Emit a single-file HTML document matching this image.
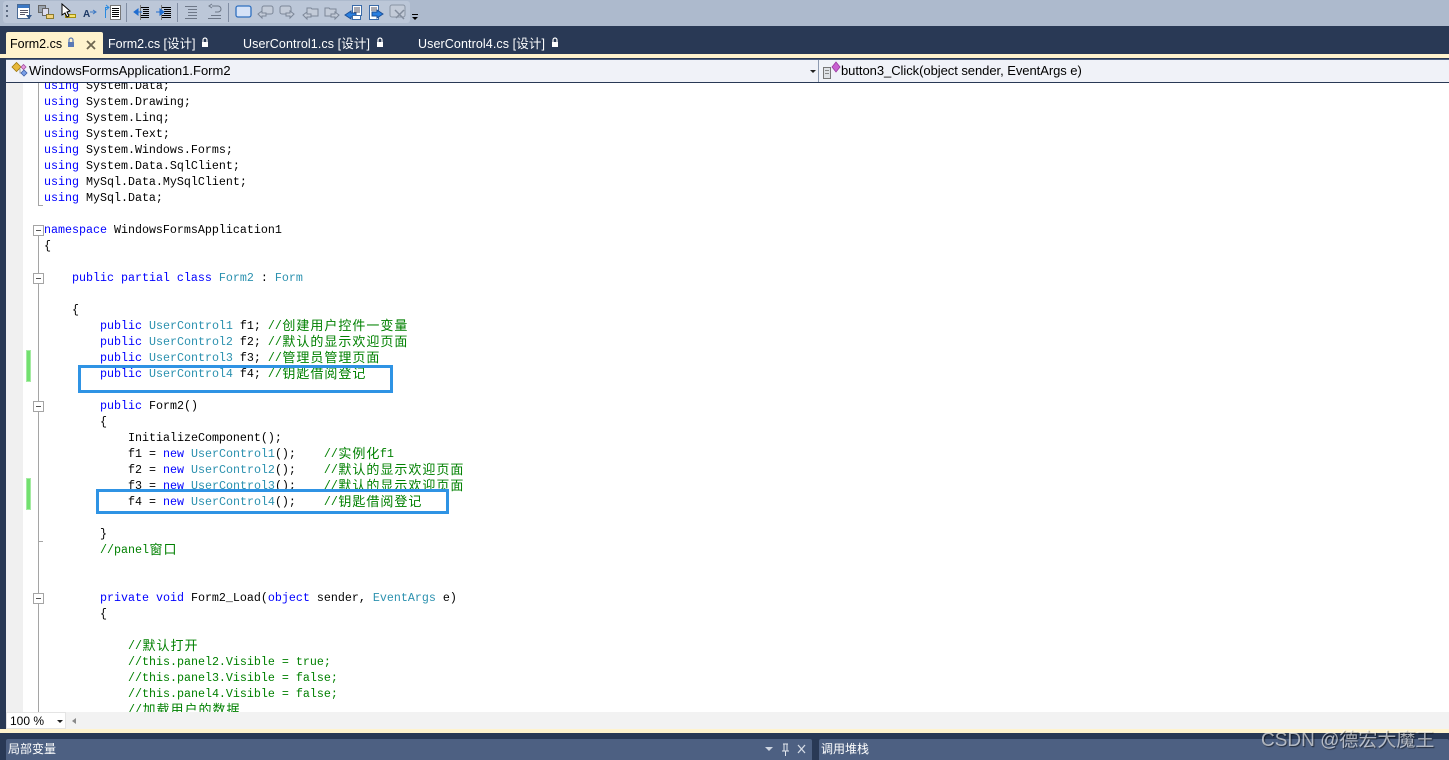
<!DOCTYPE html>
<html lang="zh"><head><meta charset="utf-8"><title>Form2.cs</title>
<style>
html,body{margin:0;padding:0;width:1449px;height:760px;overflow:hidden;background:#293955}
body{position:relative;font-family:"Liberation Sans","Noto Sans CJK SC",sans-serif}
.a{position:absolute}
#tb{left:0;top:0;width:1449px;height:26px;background:#adbacd}
#tbi{left:3px;top:1px;width:407px;height:22px;background:#bcc7d8;border-radius:3px}
.tab{position:absolute;top:36px;height:16px;line-height:16px;font-size:12.5px;color:#fff;white-space:pre}
#code{left:23px;top:83px;width:1426px;height:629px;background:#fff;overflow:hidden}
.l{position:absolute;height:16px;line-height:16px;white-space:pre;font-family:"Liberation Mono",monospace;font-size:11.67px;color:#000}
.k{color:#0000ff}.t{color:#2b91af}.c{color:#008000}
.z{font-family:"Noto Sans CJK SC",sans-serif;font-size:13px;display:inline-block;width:14px;text-align:center;line-height:16px;vertical-align:top;position:relative;top:-1px}
.m{position:absolute;width:9px;height:9px;border:1px solid #a5a5a5;background:#fff;left:33px}
.m:after{content:"";position:absolute;left:2px;top:4px;width:5px;height:1px;background:#555}
.g{position:absolute;left:26px;width:5px;background:#72e06f;border:0;box-shadow:inset 0 0 0 1px #a5eba3}
.box{position:absolute;border:3px solid #2f93e4;box-sizing:border-box}
.cr path,.cr rect{shape-rendering:crispEdges}
</style></head>
<body>
<div class="a" id="tb"></div><div class="a" id="tbi"></div>
<svg class="a" style="left:0;top:0" width="430" height="26" viewBox="0 0 430 26">
<g fill="#5c6a80"><rect x="6" y="5" width="2" height="2"/><rect x="6" y="10" width="2" height="2"/><rect x="6" y="15" width="2" height="2"/></g>
<g class="cr">
<rect x="17.500" y="4.500" width="12" height="14" fill="#fff" stroke="#4a6a94"/><rect x="18" y="5" width="11" height="3" fill="#3b78c4"/><path d="M20 10.500h8M20 12.500h8M20 14.500h5" stroke="#556" fill="none"/>
<rect x="38.500" y="5.500" width="7" height="7" fill="#99a2ad" stroke="#666"/><rect x="42.500" y="8.500" width="6" height="7" fill="#dde" stroke="#666"/><rect x="46.500" y="14.500" width="7" height="4" fill="#f2d27a" stroke="#8a7a30"/>
<rect x="65.500" y="14.500" width="10" height="3" fill="#f5e26e" stroke="#a38f10"/>
<path d="M105.500 18V7.500h3" stroke="#2a8ae0" fill="none"/><rect x="110.500" y="5.500" width="10" height="14" fill="#fff" stroke="#777"/><path d="M112 8.500h7M112 10.500h7M112 12.500h7M112 14.500h7M112 16.500h7" stroke="#000" fill="none"/>
<rect x="126" y="3" width="1" height="19" fill="#808da3"/>
<path d="M140 7.500h9M143 9.500h6M143 11.500h6M143 13.500h6M140 15.500h9M140 17.500h9" stroke="#000" fill="none"/><path d="M140.500 5v15" stroke="#777"/>
<path d="M161 7.500h10M164 9.500h7M164 11.500h7M164 13.500h7M161 15.500h10M161 17.500h10" stroke="#000" fill="none"/><path d="M161.500 5v15" stroke="#777"/>
<rect x="177" y="3" width="1" height="19" fill="#808da3"/>
<path d="M185 6.500h12M188 9.500h9M188 12.500h9M188 15.500h9M185 18.500h12" stroke="#6e7888" fill="none"/>
<path d="M208 18.500h13M211 15.500h10" stroke="#6e7888" fill="none"/>
<rect x="228" y="3" width="1" height="19" fill="#808da3"/>
<path d="M412 14.500h6" stroke="#000" fill="none"/>
</g>
<path d="M62 4v11l3-2 2 4 2-1-2-4 3-1z" fill="#fff" stroke="#000"/>
<path d="M26 15l3 4 3-4z" fill="#35588a"/>
<text x="83" y="17" font-family="Liberation Sans" font-size="10" font-weight="bold" fill="#1d3a66">A</text><path d="M90 12h5M93 10l3 2-3 2" stroke="#3b78c4" fill="none"/>
<path d="M106 5l3 2.500-3 2.500" stroke="#2a8ae0" fill="none"/>
<path d="M142 12h-7M138 9l-4 3 4 3z" stroke="#1f6dd0" fill="#1f6dd0"/>
<path d="M156 12h7M160 9l4 3-4 3z" stroke="#1f6dd0" fill="#1f6dd0"/>
<path d="M212 6h6a3 3 0 0 1 0 6h-3M212 4l-3 2 3 2" stroke="#6e7888" fill="none"/>
<rect x="236" y="6" width="15" height="11" rx="2" fill="#d5e2f7" stroke="#2f6fbf" stroke-width="1.300"/>
<g fill="#c3cbd8" stroke="#7c8798"><rect x="262" y="6" width="11" height="8" rx="2"/><path d="M258 14l4-3v2h4v3h-4v2z"/><rect x="280" y="6" width="11" height="8" rx="2"/><path d="M294 14l-4-3v2h-4v3h4v2z"/><path d="M307 8h4l1 1h6v7h-11z"/><path d="M303 15l4-3v2h4v3h-4v2z"/><path d="M325 8h4l1 1h6v7h-11z"/><path d="M339 15l-4-3v2h-4v3h4v2z"/></g>
<rect x="352.500" y="5.500" width="9" height="10" fill="#fff" stroke="#3a6aa8"/><path d="M354 8h6M354 10h6M354 12h6" stroke="#556"/><path d="M345 15l6-4v2h5v4h-5v2z" fill="#2a7fe0" stroke="#1c4f96"/><rect x="352.500" y="15.500" width="8" height="4" fill="#fff" stroke="#3a6aa8"/>
<rect x="369.500" y="5.500" width="9" height="14" fill="#fff" stroke="#3a6aa8"/><path d="M371 8h6M371 10h6" stroke="#556"/><path d="M383 14l-6-4v2h-5v4h5v2z" fill="#2a7fe0" stroke="#1c4f96"/>
<rect x="390" y="5" width="15" height="12" rx="2" fill="#c3cbd8" stroke="#8a94a4"/><path d="M395 10l9 9M404 10l-8 8" stroke="#838d9d" stroke-width="1.500"/>
<path d="M412 17h6l-3 3z" fill="#000"/>
</svg>

<div class="a" style="left:6px;top:32px;width:97px;height:22px;background:#fff3cd;border-radius:2px 2px 0 0"></div>
<div class="tab" style="left:10px;color:#000">Form2.cs</div>
<svg class="a" style="left:0;top:30px" width="600" height="24" viewBox="0 0 600 24">
<g fill="none" stroke="#5a79b5" stroke-width="1.200"><path d="M69 12v-2a2 2 0 0 1 4 0v2"/></g><rect x="68" y="12" width="6" height="5" fill="#5a79b5"/>
<path d="M87 11l8 8M95 11l-8 8" stroke="#6e6650" stroke-width="1.800"/>
<g fill="none" stroke="#fff" stroke-width="1.200"><path d="M203 12v-2a2 2 0 0 1 4 0v2M378 12v-2a2 2 0 0 1 4 0v2M553 12v-2a2 2 0 0 1 4 0v2"/></g>
<g fill="#fff"><rect x="202" y="12" width="6" height="5"/><rect x="377" y="12" width="6" height="5"/><rect x="552" y="12" width="6" height="5"/></g>
</svg>
<div class="tab" style="left:108px">Form2.cs [设计]</div>
<div class="tab" style="left:243px;letter-spacing:.1px">UserControl1.cs [设计]</div>
<div class="tab" style="left:418px;letter-spacing:.1px">UserControl4.cs [设计]</div>

<div class="a" style="left:0;top:54px;width:1449px;height:4px;background:#fff3cd"></div>
<div class="a" style="left:6px;top:59px;width:1443px;height:22px;background:#f0f2f8;border-top:1px solid #4d6082;border-bottom:1px solid #4d6082"></div>
<div class="a" style="left:6px;top:58px;width:1443px;height:1px;background:#293955"></div>
<div class="a" style="left:6px;top:82px;width:1443px;height:1px;background:#293955"></div>
<div class="a" style="left:818px;top:60px;width:1px;height:22px;background:#8d9ab0"></div>
<svg class="a" style="left:10px;top:60px" width="20" height="20" viewBox="0 0 20 20"><path d="M2 7l4.500-4.500 4.500 4.500-4.500 4.500z" fill="#e8b93a" stroke="#a07a10" stroke-width=".8"/><path d="M11 7l2.500-2.500 2.500 2.500-2.500 2.500z" fill="#e79adf" stroke="#a050a0" stroke-width=".8"/><path d="M10 9v4h2" stroke="#888" fill="none" stroke-width=".8"/><path d="M11 13l3-3 3 3-3 3z" fill="#7aa0e8" stroke="#4060a8" stroke-width=".8"/></svg>
<div class="a" style="left:29px;top:62px;height:17px;line-height:17px;font-size:13px;color:#000;white-space:pre">WindowsFormsApplication1.Form2</div>
<svg class="a" style="left:810px;top:60px" width="32" height="22" viewBox="0 0 32 22"><path d="M0 10h6l-3 3z" fill="#222"/><rect x="13.500" y="7.500" width="7" height="11" fill="#dfe2e6" stroke="#777"/><path d="M15 10.500h4M15 13.500h4" stroke="#888"/><path d="M26 2l4 5-4 5-4-5z" fill="#c860d0" stroke="#9a3aa0" stroke-width=".8"/></svg>
<div class="a" style="left:841px;top:62px;height:17px;line-height:17px;font-size:13px;letter-spacing:-.05px;color:#000;white-space:pre">button3_Click(object sender, EventArgs e)</div>

<div class="a" style="left:0;top:58px;width:6px;height:681px;background:#293955"></div>
<div class="a" style="left:6px;top:83px;width:17px;height:629px;background:#f0f0f0"></div>
<div class="a" id="code"></div>
<div class="a" style="left:38px;top:83px;width:1px;height:123px;background:#a5a5a5"></div>
<div class="a" style="left:38px;top:205px;width:5px;height:1px;background:#a5a5a5"></div>
<div class="a" style="left:38px;top:235px;width:1px;height:477px;background:#a5a5a5"></div>
<div class="a" style="left:38px;top:541px;width:5px;height:1px;background:#a5a5a5"></div>
<div class="m" style="top:225px"></div><div class="m" style="top:273px"></div><div class="m" style="top:401px"></div><div class="m" style="top:593px"></div>
<div class="g" style="top:350px;height:32px"></div><div class="g" style="top:478px;height:32px"></div>

<div class="a" style="left:0;top:83px;width:1449px;height:629px;overflow:hidden">
<div style="position:absolute;left:0;top:-83px;width:1449px;height:712px">
<div class="l" style="left:44px;top:78px"><span class="k">using</span> System.Data;</div>
<div class="l" style="left:44px;top:94px"><span class="k">using</span> System.Drawing;</div>
<div class="l" style="left:44px;top:110px"><span class="k">using</span> System.Linq;</div>
<div class="l" style="left:44px;top:126px"><span class="k">using</span> System.Text;</div>
<div class="l" style="left:44px;top:142px"><span class="k">using</span> System.Windows.Forms;</div>
<div class="l" style="left:44px;top:158px"><span class="k">using</span> System.Data.SqlClient;</div>
<div class="l" style="left:44px;top:174px"><span class="k">using</span> MySql.Data.MySqlClient;</div>
<div class="l" style="left:44px;top:190px"><span class="k">using</span> MySql.Data;</div>
<div class="l" style="left:44px;top:222px"><span class="k">namespace</span> WindowsFormsApplication1</div>
<div class="l" style="left:44px;top:238px">{</div>
<div class="l" style="left:72px;top:270px"><span class="k">public partial class</span> <span class="t">Form2</span> : <span class="t">Form</span></div>
<div class="l" style="left:72px;top:302px">{</div>
<div class="l" style="left:100px;top:318px"><span class="k">public</span> <span class="t">UserControl1</span> f1; <span class="c">//<span class="z">创</span><span class="z">建</span><span class="z">用</span><span class="z">户</span><span class="z">控</span><span class="z">件</span><span class="z">一</span><span class="z">变</span><span class="z">量</span></span></div>
<div class="l" style="left:100px;top:334px"><span class="k">public</span> <span class="t">UserControl2</span> f2; <span class="c">//<span class="z">默</span><span class="z">认</span><span class="z">的</span><span class="z">显</span><span class="z">示</span><span class="z">欢</span><span class="z">迎</span><span class="z">页</span><span class="z">面</span></span></div>
<div class="l" style="left:100px;top:350px"><span class="k">public</span> <span class="t">UserControl3</span> f3; <span class="c">//<span class="z">管</span><span class="z">理</span><span class="z">员</span><span class="z">管</span><span class="z">理</span><span class="z">页</span><span class="z">面</span></span></div>
<div class="l" style="left:100px;top:366px"><span class="k">public</span> <span class="t">UserControl4</span> f4; <span class="c">//<span class="z">钥</span><span class="z">匙</span><span class="z">借</span><span class="z">阅</span><span class="z">登</span><span class="z">记</span></span></div>
<div class="l" style="left:100px;top:398px"><span class="k">public</span> Form2()</div>
<div class="l" style="left:100px;top:414px">{</div>
<div class="l" style="left:128px;top:430px">InitializeComponent();</div>
<div class="l" style="left:128px;top:446px">f1 = <span class="k">new</span> <span class="t">UserControl1</span>();    <span class="c">//<span class="z">实</span><span class="z">例</span><span class="z">化</span>f1</span></div>
<div class="l" style="left:128px;top:462px">f2 = <span class="k">new</span> <span class="t">UserControl2</span>();    <span class="c">//<span class="z">默</span><span class="z">认</span><span class="z">的</span><span class="z">显</span><span class="z">示</span><span class="z">欢</span><span class="z">迎</span><span class="z">页</span><span class="z">面</span></span></div>
<div class="l" style="left:128px;top:478px">f3 = <span class="k">new</span> <span class="t">UserControl3</span>();    <span class="c">//<span class="z">默</span><span class="z">认</span><span class="z">的</span><span class="z">显</span><span class="z">示</span><span class="z">欢</span><span class="z">迎</span><span class="z">页</span><span class="z">面</span></span></div>
<div class="l" style="left:128px;top:494px">f4 = <span class="k">new</span> <span class="t">UserControl4</span>();    <span class="c">//<span class="z">钥</span><span class="z">匙</span><span class="z">借</span><span class="z">阅</span><span class="z">登</span><span class="z">记</span></span></div>
<div class="l" style="left:100px;top:526px">}</div>
<div class="l" style="left:100px;top:542px"><span class="c">//panel<span class="z">窗</span><span class="z">口</span></span></div>
<div class="l" style="left:100px;top:590px"><span class="k">private void</span> Form2_Load(<span class="k">object</span> sender, <span class="t">EventArgs</span> e)</div>
<div class="l" style="left:100px;top:606px">{</div>
<div class="l c" style="left:128px;top:638px">//<span class="z">默</span><span class="z">认</span><span class="z">打</span><span class="z">开</span></div>
<div class="l c" style="left:128px;top:654px">//this.panel2.Visible = true;</div>
<div class="l c" style="left:128px;top:670px">//this.panel3.Visible = false;</div>
<div class="l c" style="left:128px;top:686px">//this.panel4.Visible = false;</div>
<div class="l c" style="left:128px;top:702px;height:10px;overflow:hidden">//<span class="z">加</span><span class="z">载</span><span class="z">用</span><span class="z">户</span><span class="z">的</span><span class="z">数</span><span class="z">据</span></div>
</div></div>

<div class="box" style="left:78px;top:365px;width:315px;height:28px"></div>
<div class="box" style="left:96px;top:489px;width:353px;height:25px"></div>

<div class="a" style="left:6px;top:712px;width:1443px;height:17px;background:#f2f2f2"></div>
<div class="a" style="left:6px;top:712px;width:60px;height:17px;background:#fff;box-shadow:inset 0 0 0 1px #e4e4e4"></div>
<div class="a" style="left:10px;top:713px;height:16px;line-height:16px;font-size:12px;color:#000">100 %</div>
<svg class="a" style="left:55px;top:715px" width="30" height="12" viewBox="0 0 30 12"><path d="M2 5h6l-3 3z" fill="#222"/><path d="M17 6l4-3v6z" fill="#8a8a8a"/></svg>
<div class="a" style="left:0;top:729px;width:1449px;height:4px;background:#fff3cd"></div>
<div class="a" style="left:0;top:733px;width:1449px;height:6px;background:#293955"></div>
<div class="a" style="left:6px;top:739px;width:806px;height:21px;background:#4d6082;border-radius:2px 2px 0 0"></div>
<div class="a" style="left:819px;top:739px;width:630px;height:21px;background:#4d6082;border-radius:2px 2px 0 0"></div>
<div class="a" style="left:8px;top:741px;height:17px;line-height:17px;font-size:12px;color:#fff">局部变量</div>
<div class="a" style="left:821px;top:741px;height:17px;line-height:17px;font-size:12px;color:#fff">调用堆栈</div>
<svg class="a" style="left:760px;top:741px" width="50" height="18" viewBox="0 0 50 18"><path d="M5 6h8l-4 4z" fill="#cfd6e2"/><path d="M23 3h5M24 3v7h3V3M22 10h7M25.500 10v5" stroke="#e3e7ee" fill="none"/><path d="M38 4l7 8M45 4l-7 8" stroke="#d5dbe5" stroke-width="1.300"/></svg>
<div class="a" style="left:1261px;top:729px;height:24px;line-height:24px;font-size:19px;color:rgba(255,255,255,.62);text-shadow:1px 1px 1px rgba(0,0,0,.55);white-space:pre">CSDN @德宏大魔王</div>
</body></html>
